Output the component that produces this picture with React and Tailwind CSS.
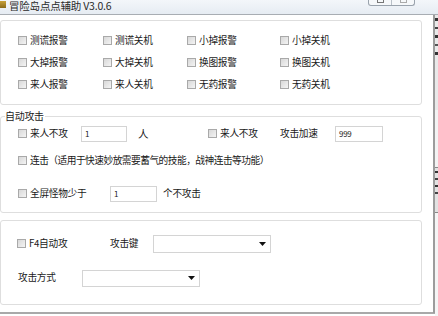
import React from "react";

const font = { fontFamily: '"Noto Sans CJK SC", "Liberation Sans", sans-serif' };

function Box() {
  return (
    <span className="inline-block w-[9px] h-[9px] shrink-0 border border-[#a9a9a9] bg-gradient-to-br from-[#d8d8d8] to-[#f4f4f4]" />
  );
}

function Check({ label, className = "", textClass = "" }) {
  return (
    <div className={"flex items-center gap-[3px] " + className}>
      <Box />
      <span className={"whitespace-nowrap " + textClass}>{label}</span>
    </div>
  );
}

function Field({ value, className = "" }) {
  return (
    <div className={"h-[16px] border border-[#d4d4d4] bg-white flex items-center pl-[3px] text-[8px] " + className}>
      {value}
    </div>
  );
}

function Combo({ className = "" }) {
  return (
    <div className={"border border-[#d4d4d4] bg-white flex items-center justify-end pr-[4px] " + className}>
      <svg width="7" height="4" viewBox="0 0 7 4">
        <path d="M0 0 H7 L3.5 4 Z" fill="#111" />
      </svg>
    </div>
  );
}

export default function App() {
  const grid1 = [
    ["测谎报警", "测谎关机", "小掉报警", "小掉关机"],
    ["大掉报警", "大掉关机", "换图报警", "换图关机"],
    ["来人报警", "来人关机", "无药报警", "无药关机"],
  ];
  return (
    <div className="w-[438px] h-[316px] overflow-hidden bg-white text-[#1a1a1a] text-[9.7px] leading-none tracking-[-0.3px]" style={font}>
      {/* title bar */}
      <div className="h-[15px] flex items-start border-b border-[#a8adb3] bg-gradient-to-b from-[#f3f6fa] to-[#e6ecf3]">
        <div className="w-[6px] h-[7px] mt-[1px] ml-0 bg-gradient-to-b from-[#c9a23a] to-[#8a6a1a]" />
        <span className="ml-[3px] text-[10.5px] leading-[12px] text-[#2a2a2a] whitespace-nowrap tracking-[-0.2px]">冒险岛点点辅助 V3.0.6</span>
        <div className="ml-auto mr-[23px] flex h-[6px] border border-t-0 border-[#9aa3ad] rounded-b-[3px] bg-[#f6f8fa]">
          <div className="w-[23px] border-r border-[#b9c0c8] flex justify-center">
            <div className="w-[7px] h-[3px] border border-[#777] border-t-0" />
          </div>
          <div className="w-[22px] flex justify-center">
            <div className="w-[7px] h-[3px] border border-[#aaa] border-t-0" />
          </div>
        </div>
      </div>

      <div className="flex h-[301px]">
        {/* main column */}
        <div className="w-[422px] flex flex-col pt-[5px]">
          {/* panel 1 */}
          <div className="h-[85px] border border-[#dedede] rounded-[3px] pt-[9px] pl-[17px]">
            {grid1.map((row, i) => (
              <div key={i} className="grid grid-cols-[85px_84px_93px_auto] h-[22px] items-center">
                {row.map((t) => (
                  <Check key={t} label={t} />
                ))}
              </div>
            ))}
          </div>

          {/* group box */}
          <div className="relative mt-[11px] h-[97px] border border-[#dedede] rounded-[3px] pt-[8px] pl-[17px]">
            <span className="absolute left-[4px] top-[-6px] bg-white pr-[1px] text-[10px]">自动攻击</span>
            <div className="flex items-center h-[18px]">
              <Check label="来人不攻" className="w-[63px]" />
              <Field value="1" className="w-[46px]" />
              <span className="ml-[11px] w-[70px] text-[10.5px]">人</span>
              <Check label="来人不攻" className="w-[72px]" />
              <span className="w-[55px]">攻击加速</span>
              <Field value="999" className="w-[48px]" />
            </div>
            <div className="flex items-center h-[18px] mt-[9px]">
              <Check label="连击（适用于快速妙放需要蓄气的技能，战神连击等功能）" textClass="tracking-[-0.5px]" />
            </div>
            <div className="flex items-center h-[18px] mt-[15px]">
              <Check label="全屏怪物少于" className="w-[92px]" />
              <Field value="1" className="w-[47px]" />
              <span className="ml-[6px]">个不攻击</span>
            </div>
          </div>

          {/* panel 3 */}
          <div className="mt-[7px] h-[85px] border border-[#dedede] rounded-[3px] pt-[14px] pl-[16px]">
            <div className="flex items-center h-[18px]">
              <Check label="F4自动攻" className="w-[93px]" />
              <span className="w-[43px]">攻击键</span>
              <Combo className="w-[118px] h-[18px]" />
            </div>
            <div className="flex items-center h-[18px] mt-[16px]">
              <span className="ml-[1px] w-[64px]">攻击方式</span>
              <Combo className="w-[118px] h-[17px]" />
            </div>
          </div>
          <div className="mt-[7px] h-[2px] bg-[#a9a9a9] w-[438px]" />
        </div>

        {/* right edge strip */}
        <div className="w-[16px] flex">
          <div className="w-[11px]" />
          <div className="w-[2px] h-[298px] bg-[#9c9c9c]" />
          <div className="w-[3px] flex flex-col">
            <div className="h-[95px] bg-[#e9e9e9] flex flex-col gap-[6px] pt-[3px]">
              <div className="h-[3px] bg-[#333]" />
              <div className="h-[2px] bg-[#444]" />
              <div className="h-[3px] bg-[#333]" />
              <div className="h-[2px] bg-[#555]" />
              <div className="h-[3px] bg-[#333]" />
            </div>
            <div className="h-[57px] bg-[#f3f3f3]" />
            <div className="h-[46px] bg-[#e2e2e2] border-y border-[#888] flex flex-col gap-[5px] pt-[3px]">
              <div className="h-[2px] bg-[#333]" />
              <div className="h-[2px] bg-[#444]" />
              <div className="h-[2px] bg-[#333]" />
              <div className="h-[2px] bg-[#444]" />
            </div>
            <div className="flex-1 bg-[#f5f5f5]" />
          </div>
        </div>
      </div>
    </div>
  );
}
